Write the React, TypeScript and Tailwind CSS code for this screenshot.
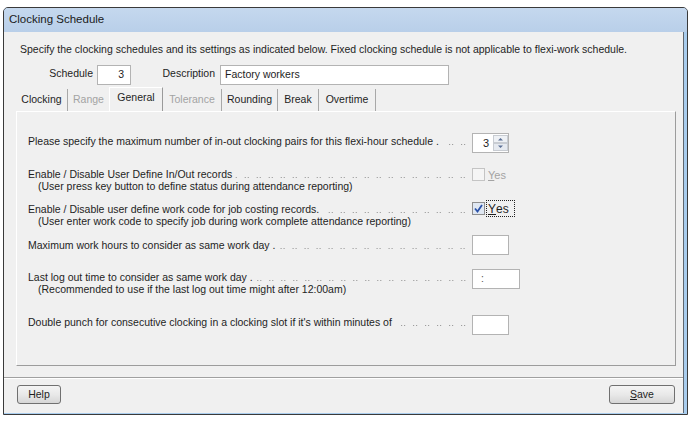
import React from 'react';

const Row: React.FC<{
  label: string;
  sub?: string;
  className: string;
  ctrlClass: string;
  control: React.ReactNode;
}> = ({ label, sub, className, ctrlClass, control }) => (
  <div className={`flex items-start ${className}`}>
    <div className="w-[438px] shrink-0">
      <div className="flex h-[12px] leading-[12px]">
        <span className="whitespace-nowrap">{label}</span>
        {/* dot leader */}
        <span className="flex-1 ml-[3px] bg-[linear-gradient(to_right,transparent_7px,#8f8f8f_7px,#8f8f8f_8px,transparent_8px,transparent_10px,#8f8f8f_10px,#8f8f8f_11px,transparent_11px)] bg-[length:12px_1px] bg-repeat-x bg-[position:right_0px_top_9px]" />
      </div>
      {sub && <div className="pl-[10px] leading-[12px] whitespace-nowrap">{sub}</div>}
    </div>
    <div className={`ml-[6px] ${ctrlClass}`}>{control}</div>
  </div>
);

const Box: React.FC<{ w: string; children?: React.ReactNode }> = ({ w, children }) => (
  <div className={`${w} h-[20px] bg-white border border-[#b3b3b3] flex items-center`}>{children}</div>
);

const Spinner = () => (
  <div className="w-[37px] h-[20px] bg-white border border-[#b3b3b3] flex items-center">
    <span className="w-[19px] text-right pr-[3px] text-[11px]">3</span>
    <svg width="15" height="16" viewBox="0 0 15 16" className="ml-[1px]">
      <rect x="0.5" y="0.5" width="14" height="7" fill="#eef1f5" stroke="#c8ccd2" />
      <rect x="0.5" y="8.5" width="14" height="7" fill="#e6eaf0" stroke="#c8ccd2" />
      <path d="M5 5.5 L7.5 3 L10 5.5 Z" fill="#5a6f94" />
      <path d="M5 10.5 L7.5 13 L10 10.5 Z" fill="#5a6f94" />
    </svg>
  </div>
);

const Tab: React.FC<{ w: string; label: string; state?: 'off' | 'on' | 'sel'; sep?: boolean }> = ({
  w,
  label,
  state = 'on',
  sep = true,
}) => {
  if (state === 'sel') {
    return (
      <div className={`${w} h-[24px] flex items-center justify-center pb-[3px] border-r border-[#9a9a9a] border-t border-l border-t-white border-l-white`}>
        {label}
      </div>
    );
  }
  return (
    <div
      className={`${w} h-[22px] flex items-center justify-center ${sep ? 'border-r border-[#a8a8a8]' : ''} ${
        state === 'off' ? 'text-[#a3a3a3]' : ''
      }`}
    >
      {label}
    </div>
  );
};

const Button: React.FC<{ w: string; children: React.ReactNode }> = ({ w, children }) => (
  <div
    className={`${w} h-[19px] rounded-[3px] border border-[#707070] bg-gradient-to-b from-[#f4f4f4] via-[#e9e9e9] to-[#d6d6d6] flex items-center justify-center`}
  >
    {children}
  </div>
);

export default function App() {
  return (
    <div className="w-[692px] h-[421px] bg-white pt-[7px] pl-[3px] font-['Liberation_Sans',Arial,sans-serif] text-[10.5px] text-[#1e1e1e]">
      <div className="w-[685px] h-[408px] border border-[#3a3a3a] rounded-t-[5px] bg-[#a9cdee] flex flex-col overflow-hidden">
        <div className="h-[24px] shrink-0 bg-gradient-to-b from-[#c5d8ee] to-[#b9cfe9] flex items-center pl-[5px] text-[11.5px] text-[#1a1a1a]">
          Clocking Schedule
        </div>

        <div className="flex-1 mr-[3px] mb-[1px] bg-[#f0f0f0] border-r border-[#5f6770] flex flex-col">
          <div className="pt-[11px] pl-[16px] leading-[12px] h-[23px] whitespace-nowrap">
            Specify the clocking schedules and its settings as indicated below. Fixed clocking schedule is not applicable to flexi-work schedule.
          </div>

          <div className="mt-[10px] flex items-center h-[20px]">
            <span className="w-[89px] text-right pb-[2px]">Schedule</span>
            <div className="ml-[4px] w-[34px] h-[20px] bg-white border border-[#b3b3b3] flex items-center justify-end pr-[6px]">3</div>
            <span className="w-[84px] text-right pb-[2px]">Description</span>
            <div className="ml-[5px] w-[229px] h-[20px] bg-white border border-[#b3b3b3] flex items-center pl-[4px]">Factory workers</div>
          </div>

          <div className="mt-[4px] ml-[12px] h-[22px] flex items-end">
            <Tab w="w-[52px]" label="Clocking" />
            <Tab w="w-[41px]" label="Range" state="off" sep={false} />
            <Tab w="w-[54px]" label="General" state="sel" />
            <Tab w="w-[59px]" label="Tolerance" state="off" />
            <Tab w="w-[56px]" label="Rounding" />
            <Tab w="w-[41px]" label="Break" />
            <Tab w="w-[57px]" label="Overtime" />
          </div>

          <div className="ml-[12px] w-[660px] h-[255px] shrink-0 border border-white border-r-[#9c9c9c] border-b-[#9c9c9c] pl-[11px]">
            <Row
              className="mt-[23px] h-[12px]"
              ctrlClass="-mt-[2px]"
              label="Please specify the maximum number of in-out clocking pairs for this flexi-hour schedule ."
              control={<Spinner />}
            />
            <Row
              className="mt-[21px] h-[24px]"
              ctrlClass="mt-0"
              label="Enable / Disable User Define In/Out records"
              sub="(User press key button to define status during attendance reporting)"
              control={
                <div className="flex items-center h-[13px]">
                  <svg width="13" height="13" viewBox="0 0 13 13">
                    <rect x="0.5" y="0.5" width="12" height="12" fill="#f5f5f5" stroke="#c4c4c4" />
                  </svg>
                  <span className="ml-[3px] text-[#a3a3a3] leading-[12px] text-[11px]">
                    <span className="underline underline-offset-1">Y</span>es
                  </span>
                </div>
              }
            />
            <Row
              className="mt-[11px] h-[24px]"
              ctrlClass="-mt-[1px]"
              label="Enable / Disable user define work code for job costing records."
              sub="(User enter work code to specify job during work complete attendance reporting)"
              control={
                <div className="flex items-center h-[13px]">
                  <svg width="13" height="13" viewBox="0 0 13 13">
                    <rect x="0.5" y="0.5" width="12" height="12" fill="#dfe7f2" stroke="#8e8e8e" />
                    <path d="M3 6.5 L5.5 9.5 L10 3" stroke="#2b52a8" strokeWidth="1.8" fill="none" />
                  </svg>
                  <span className="ml-[1px] h-[17px] w-[29px] border border-dotted border-[#222] flex items-center pl-[1px] text-[12px]">
                    <span className="underline underline-offset-1">Y</span>es
                  </span>
                </div>
              }
            />
            <Row
              className="mt-[12px] h-[12px]"
              ctrlClass="-mt-[4px]"
              label="Maximum work hours to consider as same work day ."
              control={<Box w="w-[37px]" />}
            />
            <Row
              className="mt-[20px] h-[24px]"
              ctrlClass="-mt-[2px]"
              label="Last log out time to consider as same work day ."
              sub="(Recommended to use if the last log out time might after 12:00am)"
              control={
                <Box w="w-[48px]">
                  <span className="pl-[8px] text-[#555]">:</span>
                </Box>
              }
            />
            <Row
              className="mt-[21px] h-[12px]"
              ctrlClass="-mt-[1px]"
              label="Double punch for consecutive clocking in a clocking slot if it's within minutes of"
              control={<Box w="w-[37px]" />}
            />
          </div>

          <div className="mt-[11px] h-[2px] border-t border-[#a0a0a0] border-b border-b-white" />

          <div className="mt-[6px] flex justify-between pl-[13px] pr-[8px]">
            <Button w="w-[44px]">Help</Button>
            <Button w="w-[66px]">
              <span>
                <span className="underline underline-offset-1">S</span>ave
              </span>
            </Button>
          </div>
        </div>
      </div>
    </div>
  );
}
